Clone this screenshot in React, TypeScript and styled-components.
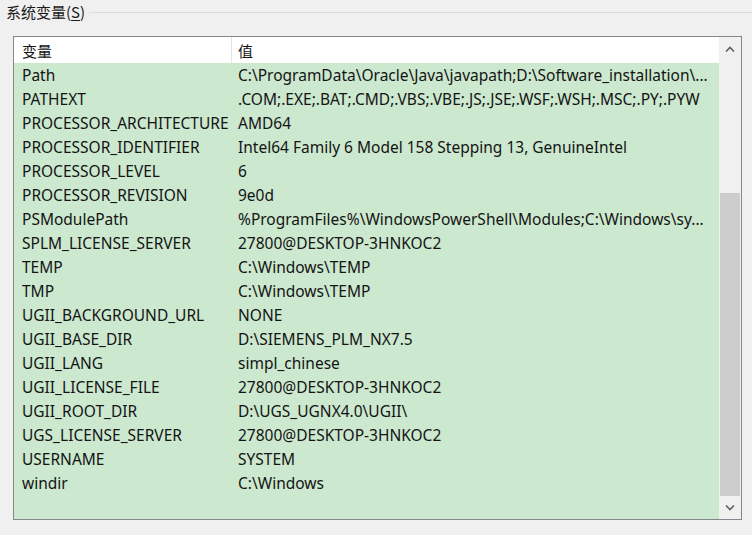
import React from "react";
import styled, { createGlobalStyle } from "styled-components";

const GlobalStyle = createGlobalStyle`
  html, body {
    margin: 0;
    padding: 0;
    background: #f0f0f0;
  }
  body {
    font-family: "Noto Sans", "Noto Sans CJK SC", sans-serif;
    font-size: 15.5px;
    color: #141414;
  }
`;

const Page = styled.div`
  width: 752px;
  height: 535px;
  overflow: hidden;
  background: #f0f0f0;
`;

const GroupHeader = styled.div`
  display: flex;
  align-items: center;
  height: 26px;
  padding-left: 6px;
`;

const GroupLabel = styled.span`
  font-family: "Noto Sans CJK SC", sans-serif;
  font-size: 15px;
  line-height: 20px;
  color: #1a1a1a;
  margin-top: -2px;

  u {
    text-underline-offset: 2px;
  }
`;

const GroupLine = styled.div`
  flex: 1;
  height: 1px;
  background: #dcdcdc;
  margin-left: 4px;
  margin-top: -1px;
`;

const ListBox = styled.div`
  display: flex;
  margin: 10px 0 0 13px;
  width: 727px;
  height: 482px;
  border: 1px solid #828790;
  background: #cce8cf;
`;

const Grid = styled.div`
  flex: 1;
  display: flex;
  flex-direction: column;
`;

const HeaderRow = styled.div`
  display: flex;
  height: 26px;
  background: #ffffff;
`;

const HeaderCell = styled.div<{ $w?: number }>`
  width: ${(p) => (p.$w ? `${p.$w}px` : "auto")};
  flex: ${(p) => (p.$w ? "none" : "1")};
  display: flex;
  align-items: center;
  padding-left: ${(p) => (p.$w ? "8px" : "6px")};
  box-sizing: border-box;
  border-right: ${(p) => (p.$w ? "1px solid #e5e5e5" : "none")};
  font-family: "Noto Sans CJK SC", sans-serif;
  font-size: 15px;
`;

const Row = styled.div`
  display: flex;
  height: 24px;
  align-items: center;
  white-space: nowrap;
`;

const NameCell = styled.div`
  width: 218px;
  padding-left: 8px;
  box-sizing: border-box;
  overflow: hidden;
`;

const ValueCell = styled.div`
  flex: 1;
  padding-left: 6px;
  overflow: hidden;
`;

const ScrollBar = styled.div`
  width: 22px;
  display: flex;
  flex-direction: column;
  background: #f0f0f0;
`;

const ArrowButton = styled.div`
  height: 23px;
  display: flex;
  align-items: center;
  justify-content: center;
  color: #606060;
`;

const Track = styled.div<{ $top: number }>`
  flex: 1;
  display: flex;
  flex-direction: column;
  padding-top: ${(p) => p.$top}px;
`;

const Thumb = styled.div`
  flex: 1;
  margin: 0 1px;
  background: #cdcdcd;
`;

const rows: [string, string][] = [
  ["Path", "C:\\ProgramData\\Oracle\\Java\\javapath;D:\\Software_installation\\..."],
  ["PATHEXT", ".COM;.EXE;.BAT;.CMD;.VBS;.VBE;.JS;.JSE;.WSF;.WSH;.MSC;.PY;.PYW"],
  ["PROCESSOR_ARCHITECTURE", "AMD64"],
  ["PROCESSOR_IDENTIFIER", "Intel64 Family 6 Model 158 Stepping 13, GenuineIntel"],
  ["PROCESSOR_LEVEL", "6"],
  ["PROCESSOR_REVISION", "9e0d"],
  ["PSModulePath", "%ProgramFiles%\\WindowsPowerShell\\Modules;C:\\Windows\\sy..."],
  ["SPLM_LICENSE_SERVER", "27800@DESKTOP-3HNKOC2"],
  ["TEMP", "C:\\Windows\\TEMP"],
  ["TMP", "C:\\Windows\\TEMP"],
  ["UGII_BACKGROUND_URL", "NONE"],
  ["UGII_BASE_DIR", "D:\\SIEMENS_PLM_NX7.5"],
  ["UGII_LANG", "simpl_chinese"],
  ["UGII_LICENSE_FILE", "27800@DESKTOP-3HNKOC2"],
  ["UGII_ROOT_DIR", "D:\\UGS_UGNX4.0\\UGII\\"],
  ["UGS_LICENSE_SERVER", "27800@DESKTOP-3HNKOC2"],
  ["USERNAME", "SYSTEM"],
  ["windir", "C:\\Windows"],
];

const Chevron = ({ up }: { up?: boolean }) => (
  <svg width="10" height="6" viewBox="0 0 10 6">
    <path
      d={up ? "M1 5.5 L5 1.5 L9 5.5" : "M1 0.5 L5 4.5 L9 0.5"}
      fill="none"
      stroke="currentColor"
      strokeWidth="1.6"
    />
  </svg>
);

const App = () => {
  return (
    <Page>
      <GlobalStyle />
      <GroupHeader>
        <GroupLabel>
          系统变量(<u>S</u>)
        </GroupLabel>
        <GroupLine />
      </GroupHeader>
      <ListBox>
        <Grid>
          <HeaderRow>
            <HeaderCell $w={218}>变量</HeaderCell>
            <HeaderCell>值</HeaderCell>
          </HeaderRow>
          {rows.map(([name, value]) => (
            <Row key={name}>
              <NameCell>{name}</NameCell>
              <ValueCell>{value}</ValueCell>
            </Row>
          ))}
        </Grid>
        <ScrollBar>
          <ArrowButton>
            <Chevron up />
          </ArrowButton>
          <Track $top={133}>
            <Thumb />
          </Track>
          <ArrowButton>
            <Chevron />
          </ArrowButton>
        </ScrollBar>
      </ListBox>
    </Page>
  );
};

export default App;
